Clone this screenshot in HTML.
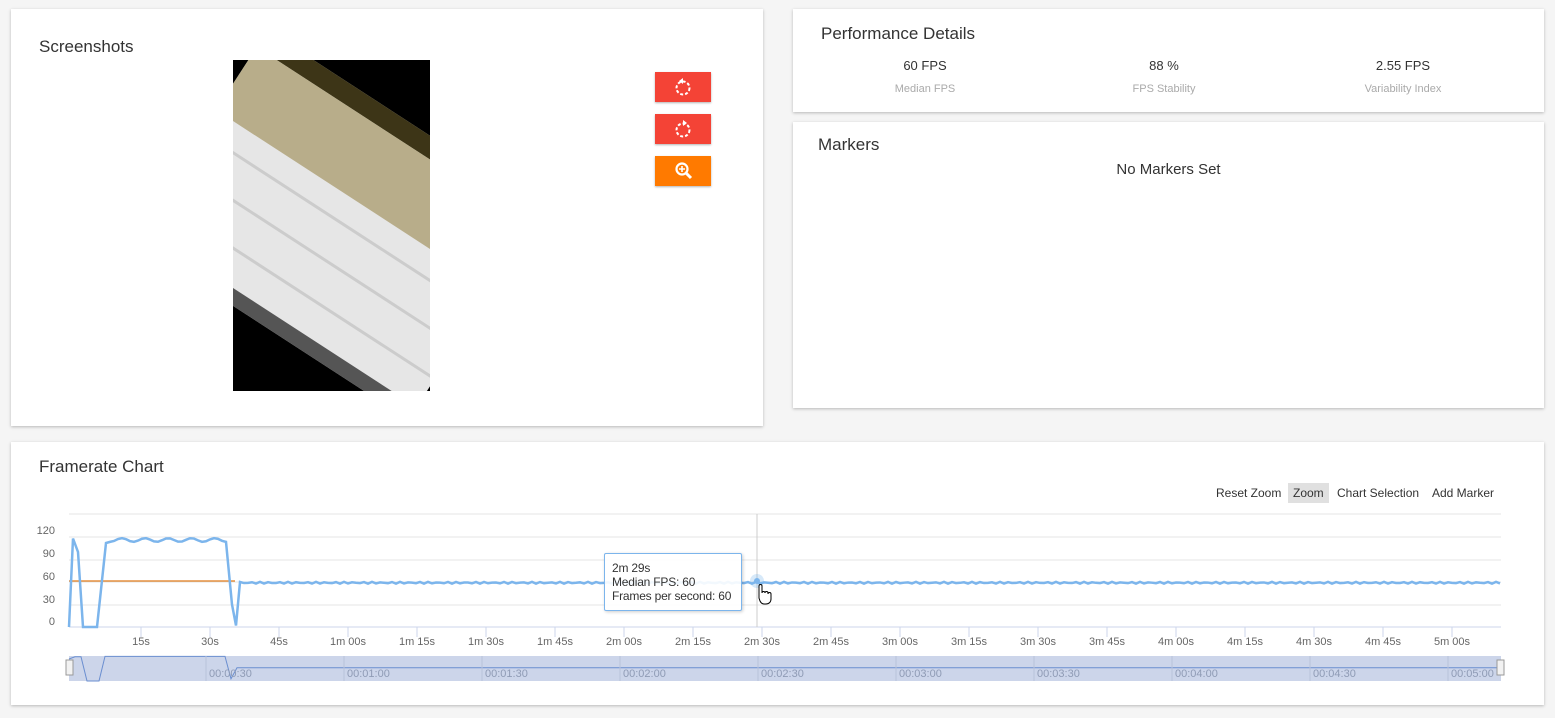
<!DOCTYPE html>
<html><head><meta charset="utf-8"><style>
*{box-sizing:border-box;margin:0;padding:0}
body{width:1555px;height:718px;background:#f5f5f5;font-family:"Liberation Sans",Arial,sans-serif;position:relative;overflow:hidden;color:#333}
.card{position:absolute;background:#fff;box-shadow:0 1px 3px rgba(0,0,0,.25)}
.title{position:absolute;font-size:17px;color:#333}
.btn{position:absolute;left:655px;width:56px;height:30px;box-shadow:0 1px 2px rgba(0,0,0,.3)}
.stat{position:absolute;text-align:center;width:200px}
.stat b{display:block;font-weight:normal;font-size:13px;color:#333}
.stat span{display:block;font-size:11px;color:#aaa;margin-top:10px}
.tb{position:absolute;top:483px;font-size:12px;color:#333;padding:3px 5px}
</style></head><body>
<div class="card" style="left:11px;top:9px;width:752px;height:417px"></div>
<div class="title" style="left:39px;top:37px">Screenshots</div>
<div style="position:absolute;left:233px;top:60px;width:197px;height:331px;background:#000;overflow:hidden">
  <div style="position:absolute;left:-60px;top:40px;width:330px;height:250px;transform:rotate(33deg);transform-origin:center;background:#e6e6e6">
    <div style="position:absolute;left:0;top:0;width:330px;height:20px;background:#3d3517"></div>
    <div style="position:absolute;left:0;top:20px;width:330px;height:75px;background:#b8ad8a"></div>
    <div style="position:absolute;left:0;top:120px;width:330px;height:3px;background:#ccc"></div>
    <div style="position:absolute;left:0;top:160px;width:330px;height:3px;background:#ccc"></div>
    <div style="position:absolute;left:0;top:200px;width:330px;height:3px;background:#ccc"></div>
    <div style="position:absolute;left:0;top:235px;width:330px;height:15px;background:#555"></div>
  </div>
</div>
<div class="btn" style="top:72px;background:#f44336"><svg width="56" height="30"><circle cx="28" cy="16" r="6.5" fill="none" stroke="#fff" stroke-width="2" stroke-dasharray="3 2"/><path d="M24 9l4-3v6z" fill="#fff"/></svg></div>
<div class="btn" style="top:114px;background:#f44336"><svg width="56" height="30"><circle cx="28" cy="16" r="6.5" fill="none" stroke="#fff" stroke-width="2" stroke-dasharray="3 2"/><path d="M32 9l-4-3v6z" fill="#fff"/></svg></div>
<div class="btn" style="top:156px;background:#ff7a00"><svg width="56" height="30"><circle cx="27" cy="13" r="5.5" fill="none" stroke="#fff" stroke-width="2.2"/><path d="M31 17l5 5" stroke="#fff" stroke-width="3"/><path d="M27 10v6M24 13h6" stroke="#fff" stroke-width="1.6"/></svg></div>

<div class="card" style="left:793px;top:9px;width:751px;height:103px"></div>
<div class="title" style="left:821px;top:24px">Performance Details</div>
<div class="stat" style="left:825px;top:58px"><b>60 FPS</b><span>Median FPS</span></div>
<div class="stat" style="left:1064px;top:58px"><b>88 %</b><span>FPS Stability</span></div>
<div class="stat" style="left:1303px;top:58px"><b>2.55 FPS</b><span>Variability Index</span></div>

<div class="card" style="left:793px;top:122px;width:751px;height:286px"></div>
<div class="title" style="left:818px;top:135px">Markers</div>
<div style="position:absolute;left:793px;width:751px;top:161px;text-align:center;font-size:15px;color:#333">No Markers Set</div>

<div class="card" style="left:11px;top:442px;width:1533px;height:263px"></div>
<div class="title" style="left:39px;top:457px">Framerate Chart</div>
<div class="tb" style="left:1211px">Reset Zoom</div>
<div class="tb" style="left:1288px;background:#e0e0e0">Zoom</div>
<div class="tb" style="left:1332px">Chart Selection</div>
<div class="tb" style="left:1427px">Add Marker</div>
<svg id="ch" style="position:absolute;left:0;top:0" width="1555" height="718" font-family="Liberation Sans,Arial,sans-serif"></svg>
<div style="position:absolute;left:604px;top:553px;width:138px;height:58px;background:rgba(255,255,255,.9);border:1px solid #7cb5ec;border-radius:2px;box-shadow:1px 1px 3px rgba(0,0,0,.2);font-size:12px;line-height:14px;padding:7px 7px;color:#333;white-space:nowrap;letter-spacing:-0.2px">2m 29s<br>Median FPS: 60<br>Frames per second: 60</div>
<script>
var s='';
[514,537,560,582,605].forEach(function(y){s+='<line x1="69" x2="1501" y1="'+y+'" y2="'+y+'" stroke="#e6e6e6"/>'});
s+='<line x1="69" x2="1501" y1="627" y2="627" stroke="#ccd6eb"/>';
[['120',530],['90',553],['60',576],['30',599],['0',621]].forEach(function(a){s+='<text x="55" y="'+(a[1]+4)+'" font-size="11" fill="#666" text-anchor="end">'+a[0]+'</text>'});
var lab=['15s','30s','45s','1m 00s','1m 15s','1m 30s','1m 45s','2m 00s','2m 15s','2m 30s','2m 45s','3m 00s','3m 15s','3m 30s','3m 45s','4m 00s','4m 15s','4m 30s','4m 45s','5m 00s'];
for(var i=0;i<20;i++){var x=72+4.6*15*(i+1);s+='<line x1="'+x+'" x2="'+x+'" y1="627" y2="637" stroke="#ccd6eb"/><text x="'+x+'" y="645" font-size="11" fill="#666" text-anchor="middle">'+lab[i]+'</text>';}
s+='<line x1="757" x2="757" y1="514" y2="627" stroke="#ccc"/>';
s+='<line x1="69" x2="235" y1="581" y2="581" stroke="#e07b1a" stroke-width="1.3"/>';
function Y(v){return 627-v*0.75}
var p=[[69,Y(0)],[73,Y(118)],[78,Y(100)],[83,Y(0)],[97,Y(0)],[106,Y(112)]];
for(var x=110;x<=228;x+=4)p.push([x,Y(116+Math.sin(x*1.3)*2.5)]);
p.push([232,Y(30)],[236,Y(2)],[240,Y(60)]);
for(x=244;x<=1500;x+=4)p.push([x,Y(59+Math.sin(x*0.9)*1.2)]);
s+='<polyline fill="none" stroke="#7cb5ec" stroke-width="2.5" points="'+p.map(function(a){return a.join(',')}).join(' ')+'"/>';
s+='<circle cx="757" cy="581" r="7" fill="#7cb5ec" opacity=".3"/><circle cx="757" cy="581" r="3" fill="#7cb5ec"/>';
s+='<rect x="69" y="656" width="1432" height="25" fill="#ccd5ea"/>';
var n='';
for(x=69;x<=1501;x+=6){var v;
 if(x<73)v=100;else if(x<83)v=110;else if(x<100)v=0;else if(x<230)v=112;else if(x<236)v=10;else v=60; n+=x+','+(681-v*0.22)+' ';}
s+='<polyline fill="none" stroke="#6a8ed0" stroke-width="1" points="'+n+'"/>';
var tl=['00:00:30','00:01:00','00:01:30','00:02:00','00:02:30','00:03:00','00:03:30','00:04:00','00:04:30','00:05:00'];
for(i=0;i<10;i++){var x=72+4.6*30*(i+1)-4;s+='<line x1="'+x+'" x2="'+x+'" y1="656" y2="681" stroke="#b8c3db"/><text x="'+(x+3)+'" y="677" font-size="11" fill="#8f9bb5">'+tl[i]+'</text>';}
s+='<rect x="66" y="660" width="7" height="15" fill="#f2f2f2" stroke="#999"/><rect x="1497" y="660" width="7" height="15" fill="#f2f2f2" stroke="#999"/>';
s+='<path d="M759 598v-12a1.5 1.5 0 0 1 3 0v7a1.5 1.5 0 0 1 3 0a1.5 1.5 0 0 1 3 0v1a1.5 1.5 0 0 1 3 0v5c0 3-2 5-5 5h-2c-2 0-3-1-4-3z" fill="#fff" stroke="#000" stroke-width="1"/>';
document.getElementById('ch').innerHTML=s;
</script>
</body></html>
